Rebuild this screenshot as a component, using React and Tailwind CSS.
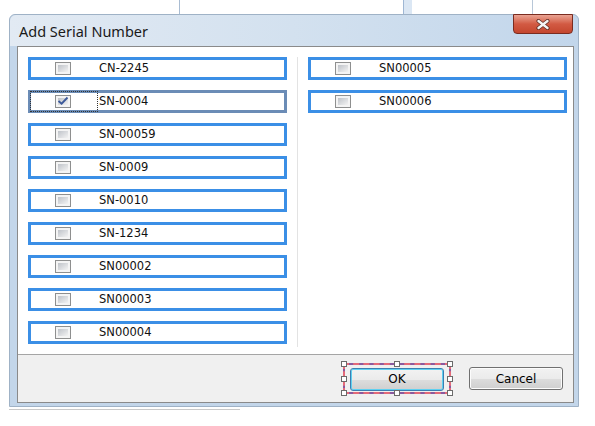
import { useState } from 'react'

const ESQUERDA = ['CN-2245', 'SN-0004', 'SN-00059', 'SN-0009', 'SN-0010', 'SN-1234', 'SN00002', 'SN00003', 'SN00004']
const DIREITA = ['SN00005', 'SN00006']

function Caixa({ marcado }) {
  return (
    <div className="w-[16px] h-[13px] border border-[#8e8f8f] bg-[#f4f4f4] p-[2px] shrink-0">
      <div className="w-full h-full bg-gradient-to-br from-[#bfc3c9] to-[#f3f3f3] relative">
        {marcado && (
          <svg viewBox="0 0 12 9" className="absolute left-[-1px] top-[-2px] w-[12px] h-[10px]">
            <path d="M1.5 4.6 L4.6 7.2 L10.5 1" fill="none" stroke="#3d5a9a" strokeWidth="1.9" />
          </svg>
        )}
      </div>
    </div>
  )
}

function Item({ texto, marcado, foco, onToggle }) {
  return (
    <div
      onClick={onToggle}
      className={`relative flex items-center h-[23px] w-[259px] border-[3px] bg-white pl-[24px] ${foco ? 'border-[#6b8cb6]' : 'border-[#3b8fe6]'}`}
    >
      {foco && <div className="absolute left-[-1px] top-[-2px] bottom-[-2px] w-[68px] border border-dotted border-[#333]" />}
      <Caixa marcado={marcado} />
      <span className="ml-[28px] text-[11.5px] leading-none text-[#111]">{texto}</span>
    </div>
  )
}

function Botao({ children, padrao }) {
  return (
    <button
      className={`w-[94px] h-[23px] rounded-[3px] border text-[12px] text-black bg-[linear-gradient(#f2f2f2_0%,#ebebeb_50%,#dddddd_51%,#cfcfcf_100%)] ${padrao ? 'border-[#3c7fb1] shadow-[inset_0_0_0_1px_#5fd0f0]' : 'border-[#707070] shadow-[inset_0_0_0_1px_#fcfcfc]'}`}
    >
      {children}
    </button>
  )
}

function Alca({ className }) {
  return <div className={`absolute w-[6px] h-[6px] bg-white border border-[#6b6b6b] ${className}`} />
}

export default function App() {
  const [marcados, setMarcados] = useState({ 'SN-0004': true })
  const alternar = t => setMarcados(m => ({ ...m, [t]: !m[t] }))

  return (
    <div className="w-[595px] h-[426px] bg-white overflow-hidden font-['DejaVu_Sans',sans-serif]">
      {/* restos da aplicação atrás do diálogo */}
      <div className="h-[14px] flex">
        <div className="w-[179px]" />
        <div className="w-px bg-[#a9bcd2]" />
        <div className="w-[223px]" />
        <div className="w-[9px] bg-[#dbe7f4] border-l border-[#9fb7d4]" />
        <div className="w-[120px]" />
        <div className="w-px bg-[#b8c7d8]" />
      </div>

      <div className="ml-[9px] w-[570px] h-[393px] flex flex-col rounded-t-[6px] border border-[#9fb2c6] bg-[#c3d6ea]">
        <div className="h-[31px] flex justify-between rounded-t-[6px] bg-gradient-to-r from-[#e2eaf3] via-[#d3e1ef] to-[#c2d6eb]">
          <span className="self-center pl-[9px] pt-[2px] text-[14.5px] text-[#1a1a1a] font-['Noto_Sans',sans-serif]">Add Serial Number</span>
          <div className="self-start -mt-px mr-[5px] w-[60px] h-[20px] rounded-b-[4px] border border-[#7a2c20] bg-gradient-to-b from-[#e9a393] via-[#d25a43] to-[#c4462e] flex items-center justify-center">
            <svg viewBox="0 0 16 11" className="w-[16px] h-[11px]">
              <path d="M3.5 2 L12.5 9 M12.5 2 L3.5 9" stroke="#5b2a22" strokeWidth="4" strokeLinecap="round" />
              <path d="M3.5 2 L12.5 9 M12.5 2 L3.5 9" stroke="#f4f4f4" strokeWidth="2.4" strokeLinecap="round" />
            </svg>
          </div>
        </div>

        <div className="flex-1 ml-[7px] mr-[4px] mb-[3px] border border-[#8a8a8a] flex flex-col">
          <div className="flex-1 bg-white flex pt-[10px] pb-[7px] pl-[10px] pr-[6px]">
            <div className="flex flex-col gap-[10px]">
              {ESQUERDA.map(t => (
                <Item key={t} texto={t} marcado={!!marcados[t]} foco={t === 'SN-0004'} onToggle={() => alternar(t)} />
              ))}
            </div>
            <div className="w-px bg-[#e3e3e3] mx-[10px]" />
            <div className="flex flex-col gap-[10px]">
              {DIREITA.map(t => (
                <Item key={t} texto={t} marcado={!!marcados[t]} onToggle={() => alternar(t)} />
              ))}
            </div>
          </div>

          <div className="h-[48px] border-t border-[#a5a5a5] bg-[#f0f0f0] flex items-center justify-end gap-[18px] pr-[10px]">
            <div className="relative border-2 border-dashed border-[#e46a78] bg-[#8b5a9e]">
              <div className="bg-[#f0f0f0] px-[5px] py-px">
                <Botao padrao>OK</Botao>
              </div>
              <Alca className="left-[-4px] top-[-4px]" />
              <Alca className="left-[calc(50%-3px)] top-[-4px]" />
              <Alca className="right-[-4px] top-[-4px]" />
              <Alca className="left-[-4px] top-[calc(50%-3px)]" />
              <Alca className="right-[-4px] top-[calc(50%-3px)]" />
              <Alca className="left-[-4px] bottom-[-4px]" />
              <Alca className="left-[calc(50%-3px)] bottom-[-4px]" />
              <Alca className="right-[-4px] bottom-[-4px]" />
            </div>
            <Botao>Cancel</Botao>
          </div>
        </div>
      </div>
      <div className="ml-[9px] mt-[2px] w-[231px] h-px bg-[#c9c9c9]" />
    </div>
  )
}
